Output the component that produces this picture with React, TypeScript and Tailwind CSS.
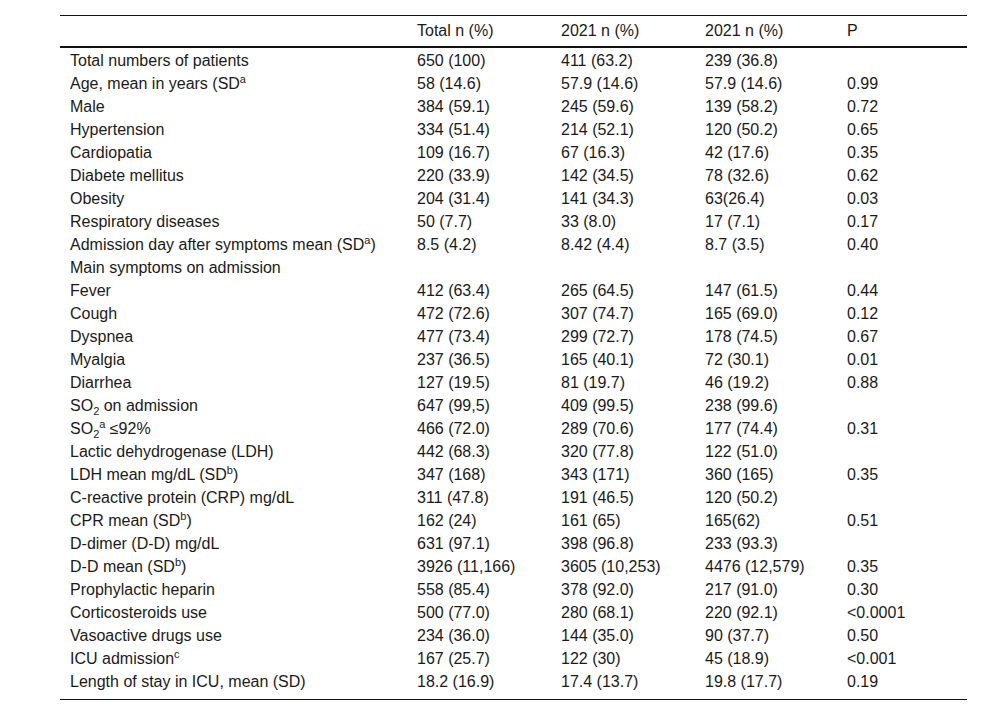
import React from "react";

type Row = { label: React.ReactNode; a: string; b: string; c: string; p: string };

const sup = (t: string) => <span className="text-[11px] relative -top-[6px] leading-none">{t}</span>;
const sub = (t: string) => <span className="text-[11px] relative top-[4px] leading-none">{t}</span>;

const rows: Row[] = [
  { label: "Total numbers of patients", a: "650 (100)", b: "411 (63.2)", c: "239 (36.8)", p: "" },
  { label: <>Age, mean in years (SD{sup("a")}</>, a: "58 (14.6)", b: "57.9 (14.6)", c: "57.9 (14.6)", p: "0.99" },
  { label: "Male", a: "384 (59.1)", b: "245 (59.6)", c: "139 (58.2)", p: "0.72" },
  { label: "Hypertension", a: "334 (51.4)", b: "214 (52.1)", c: "120 (50.2)", p: "0.65" },
  { label: "Cardiopatia", a: "109 (16.7)", b: "67 (16.3)", c: "42 (17.6)", p: "0.35" },
  { label: "Diabete mellitus", a: "220 (33.9)", b: "142 (34.5)", c: "78 (32.6)", p: "0.62" },
  { label: "Obesity", a: "204 (31.4)", b: "141 (34.3)", c: "63(26.4)", p: "0.03" },
  { label: "Respiratory diseases", a: "50 (7.7)", b: "33 (8.0)", c: "17 (7.1)", p: "0.17" },
  { label: <>Admission day after symptoms mean (SD{sup("a")})</>, a: "8.5 (4.2)", b: "8.42 (4.4)", c: "8.7 (3.5)", p: "0.40" },
  { label: "Main symptoms on admission", a: "", b: "", c: "", p: "" },
  { label: "Fever", a: "412 (63.4)", b: "265 (64.5)", c: "147 (61.5)", p: "0.44" },
  { label: "Cough", a: "472 (72.6)", b: "307 (74.7)", c: "165 (69.0)", p: "0.12" },
  { label: "Dyspnea", a: "477 (73.4)", b: "299 (72.7)", c: "178 (74.5)", p: "0.67" },
  { label: "Myalgia", a: "237 (36.5)", b: "165 (40.1)", c: "72 (30.1)", p: "0.01" },
  { label: "Diarrhea", a: "127 (19.5)", b: "81 (19.7)", c: "46 (19.2)", p: "0.88" },
  { label: <>SO{sub("2")} on admission</>, a: "647 (99,5)", b: "409 (99.5)", c: "238 (99.6)", p: "" },
  { label: <>SO{sub("2")}{sup("a")} ≤92%</>, a: "466 (72.0)", b: "289 (70.6)", c: "177 (74.4)", p: "0.31" },
  { label: "Lactic dehydrogenase (LDH)", a: "442 (68.3)", b: "320 (77.8)", c: "122 (51.0)", p: "" },
  { label: <>LDH mean mg/dL (SD{sup("b")})</>, a: "347 (168)", b: "343 (171)", c: "360 (165)", p: "0.35" },
  { label: "C-reactive protein (CRP) mg/dL", a: "311 (47.8)", b: "191 (46.5)", c: "120 (50.2)", p: "" },
  { label: <>CPR mean (SD{sup("b")})</>, a: "162 (24)", b: "161 (65)", c: "165(62)", p: "0.51" },
  { label: "D-dimer (D-D) mg/dL", a: "631 (97.1)", b: "398 (96.8)", c: "233 (93.3)", p: "" },
  { label: <>D-D mean (SD{sup("b")})</>, a: "3926 (11,166)", b: "3605 (10,253)", c: "4476 (12,579)", p: "0.35" },
  { label: "Prophylactic heparin", a: "558 (85.4)", b: "378 (92.0)", c: "217 (91.0)", p: "0.30" },
  { label: "Corticosteroids use", a: "500 (77.0)", b: "280 (68.1)", c: "220 (92.1)", p: "<0.0001" },
  { label: "Vasoactive drugs use", a: "234 (36.0)", b: "144 (35.0)", c: "90 (37.7)", p: "0.50" },
  { label: <>ICU admission{sup("c")}</>, a: "167 (25.7)", b: "122 (30)", c: "45 (18.9)", p: "<0.001" },
  { label: "Length of stay in ICU, mean (SD)", a: "18.2 (16.9)", b: "17.4 (13.7)", c: "19.8 (17.7)", p: "0.19" },
];

const grid = "grid grid-cols-[347px_144px_144px_142px_130px]";

export default function App() {
  return (
    <div className="w-[1000px] h-[714px] bg-white pt-[15px] pl-[60px] text-[16px] text-[#1a1a1a] font-['Liberation_Sans',Arial,sans-serif]">
      <div className="w-[907px] border-t border-[#111] border-b border-b-[#111] pb-[6px]">
        <div className={`${grid} h-[32px] items-center border-b-2 border-[#111] leading-none`}>
          <div className="pl-[10px]"></div>
          <div className="pl-[10px]">Total n (%)</div>
          <div className="pl-[10px]">2021 n (%)</div>
          <div className="pl-[10px]">2021 n (%)</div>
          <div className="pl-[10px]">P</div>
        </div>
        <div className="pt-[1px]">
          {rows.map((r, i) => (
            <div key={i} className={`${grid} h-[23px] items-center leading-none`}>
              <div className="pl-[10px] whitespace-nowrap">{r.label}</div>
              <div className="pl-[10px] whitespace-nowrap">{r.a}</div>
              <div className="pl-[10px] whitespace-nowrap">{r.b}</div>
              <div className="pl-[10px] whitespace-nowrap">{r.c}</div>
              <div className="pl-[10px] whitespace-nowrap">{r.p}</div>
            </div>
          ))}
        </div>
      </div>
    </div>
  );
}
